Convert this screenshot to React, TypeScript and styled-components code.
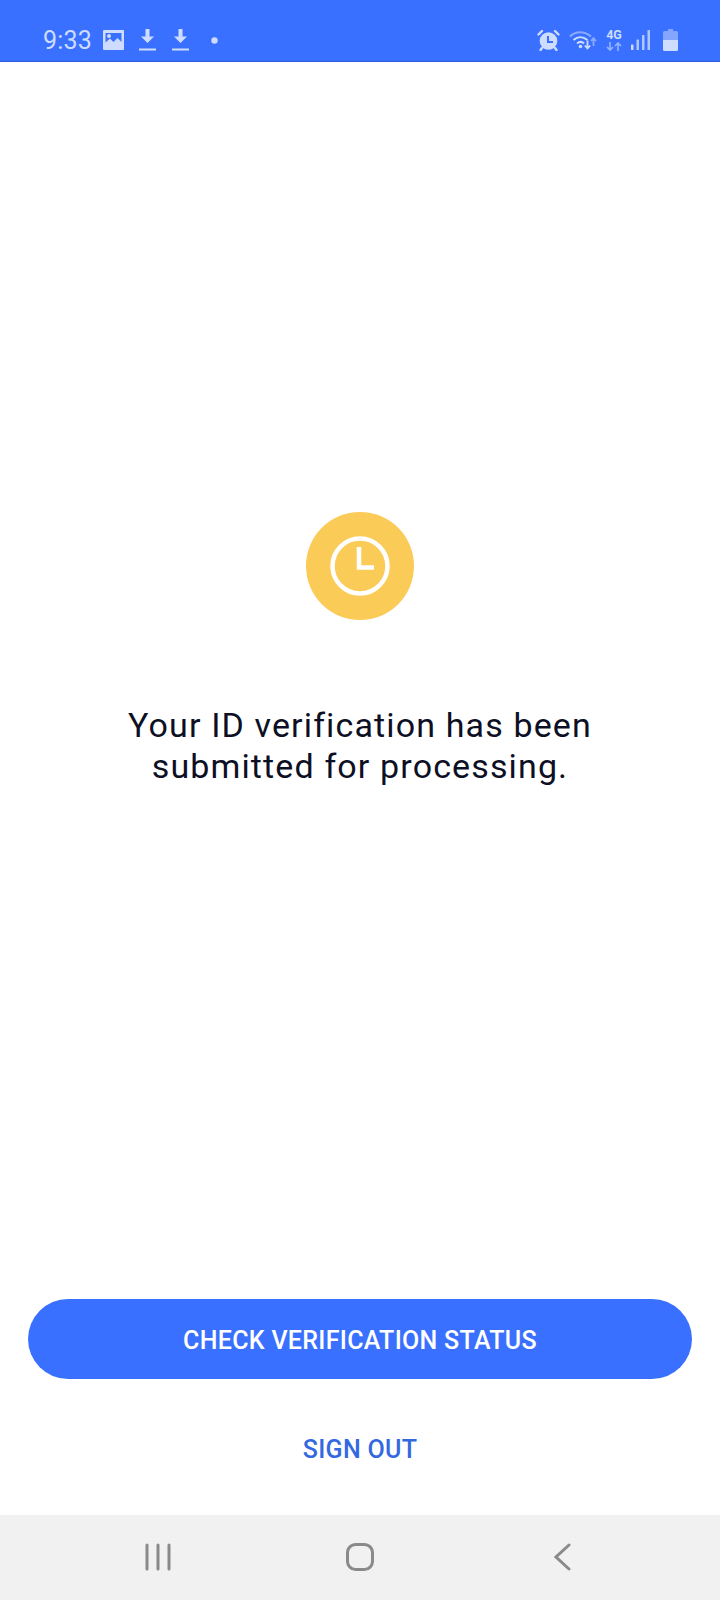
import { FunctionComponent, JSX } from 'react';
import styled, { createGlobalStyle } from 'styled-components';

const GlobalStyle = createGlobalStyle`
  html, body {
    margin: 0;
    padding: 0;
    background: #ffffff;
  }
`;

const AppContainer = styled.div`
  width: 720px;
  height: 1600px;
  display: flex;
  flex-direction: column;
  font-family: Roboto, 'Liberation Sans', sans-serif;
  background: #ffffff;
  overflow: hidden;
`;

const StatusBar = styled.div`
  box-sizing: border-box;
  height: 62px;
  flex: none;
  background: #3a70ff;
  border-bottom: 1px solid #2f5fd6;
  padding: 24px 42px 0 43px;
  display: flex;
  justify-content: space-between;
  align-items: flex-start;
  color: #cddcff;
`;

const StatusGroup = styled.div<{ gap: number }>`
  display: flex;
  align-items: center;
  height: 32px;
  gap: ${({ gap }) => gap}px;
`;

const Clock = styled.span`
  font-size: 25px;
  line-height: 32px;
  padding-top: 2px;
  margin-right: -3px;
  letter-spacing: 0.2px;
`;

const DotSlot = styled.span`
  display: flex;
  margin-left: 7px;
`;

const BatterySlot = styled.span`
  display: flex;
  margin-left: 4px;
`;

const Content = styled.main`
  flex: 1;
  display: flex;
  flex-direction: column;
  align-items: center;
  padding-top: 450px;
`;

const Badge = styled.div`
  width: 108px;
  height: 108px;
  border-radius: 50%;
  background: #fbcb58;
  display: flex;
  align-items: center;
  justify-content: center;
`;

const Message = styled.p`
  margin: 85px 0 0;
  color: #0d1024;
  font-size: 34px;
  line-height: 41px;
  letter-spacing: 1.13px;
  text-align: center;
`;

const Actions = styled.div`
  margin-top: auto;
  display: flex;
  flex-direction: column;
  align-items: center;
  padding-bottom: 40px;
`;

const PrimaryButton = styled.button`
  width: 664px;
  height: 80px;
  padding: 3px 0 0;
  border: none;
  border-radius: 40px;
  background: #3a70ff;
  color: #ffffff;
  font-family: inherit;
  font-size: 25px;
  font-weight: 500;
  letter-spacing: 0.3px;
`;

const TextButton = styled.button`
  margin-top: 44px;
  height: 52px;
  padding: 0 20px;
  border: none;
  background: none;
  color: #3268e0;
  font-family: inherit;
  font-size: 25px;
  font-weight: 500;
  letter-spacing: 0.3px;
`;

const NavBar = styled.nav`
  height: 85px;
  flex: none;
  background: #f1f1f1;
  display: grid;
  grid-template-columns: repeat(3, 202px);
  justify-content: center;
  align-items: center;
  justify-items: center;
`;

const NavSlot = styled.div`
  display: flex;
  align-items: center;
  justify-content: center;
  height: 85px;
  padding-bottom: 1px;
  box-sizing: border-box;
`;

const ImageIcon = () => (
  <svg width="21" height="20" viewBox="0 0 21 20">
    <path fill="currentColor" fillRule="evenodd" d="M1 0h19a1 1 0 0 1 1 1v18a1 1 0 0 1-1 1H1a1 1 0 0 1-1-1V1a1 1 0 0 1 1-1zm1.500 3v9.500l4.500-4 3.500 3.500 4-4 4 4V3z" />
    <circle cx="6" cy="6" r="2" fill="currentColor" />
  </svg>
);

const DownloadIcon = () => (
  <svg width="19" height="22" viewBox="-1 0 19 22">
    <path fill="currentColor" d="M6.500 0h4v7.500H15L8.500 14 2 7.500h4.500z" />
    <rect x="0" y="19.500" width="17" height="2" fill="currentColor" />
  </svg>
);

const Dot = () => (
  <svg width="7" height="7" viewBox="0 0 7 7">
    <circle cx="3.500" cy="3.500" r="3.200" fill="currentColor" />
  </svg>
);

const AlarmIcon = () => (
  <svg width="23" height="22" viewBox="0 0 23 22">
    <circle cx="11.500" cy="12" r="8.800" fill="currentColor" />
    <path d="M1.500 5.500 5 2M21.500 5.500 18 2M5 19l-1.500 2M18 19l1.500 2" stroke="currentColor" strokeWidth="2.400" strokeLinecap="round" fill="none" />
    <path d="M11 7v6h5" stroke="#3a70ff" strokeWidth="2" fill="none" />
  </svg>
);

const WifiIcon = () => (
  <svg width="28" height="22" viewBox="0 0 28 22" fill="none">
    <path d="M1 7.500C6.500 1.800 15.500 1.800 22 7.500" stroke="currentColor" strokeOpacity="0.55" strokeWidth="2" />
    <path d="M4.500 11C8.500 7.300 14 7.300 18.500 11" stroke="currentColor" strokeWidth="2" />
    <path d="M8 14.500c2.300-2 5-2 7 0" stroke="currentColor" strokeWidth="2" />
    <circle cx="11.500" cy="17.500" r="1.800" fill="currentColor" />
    <path d="M18.500 11.500v8M15.800 16.500l2.700 3 2.700-3" stroke="currentColor" strokeWidth="1.800" />
    <path d="M24.500 17V9.500M22 12l2.500-2.800L27 12" stroke="currentColor" strokeOpacity="0.55" strokeWidth="1.800" />
  </svg>
);

const NetworkLabel = styled.span`
  font-size: 12.5px;
  font-weight: 700;
  line-height: 12px;
  display: block;
  text-align: center;
`;

const NetworkStack = styled.div`
  display: flex;
  flex-direction: column;
  align-items: center;
  width: 16px;
  gap: 1px;
  color: #cddcff;
`;

const NetworkArrows = () => (
  <svg width="16" height="9" viewBox="0 0 16 9" fill="none" stroke="currentColor" strokeOpacity="0.6" strokeWidth="1.700">
    <path d="M4 0v8M1 5l3 3 3-3M12 9V1M9 4l3-3 3 3" />
  </svg>
);

const SignalIcon = () => (
  <svg width="19" height="20" viewBox="0 0 19 20" fill="currentColor">
    <rect x="0" y="14.500" width="2.500" height="5.500" rx="0.500" />
    <rect x="5.500" y="9.500" width="2.500" height="10.500" rx="0.500" fillOpacity="0.8" />
    <rect x="11" y="5" width="2.500" height="15" rx="0.500" fillOpacity="0.8" />
    <rect x="16.500" y="0" width="2.500" height="20" rx="0.500" fillOpacity="0.8" />
  </svg>
);

const BatteryIcon = () => (
  <svg width="15" height="22" viewBox="0 0 15 22" fill="currentColor">
    <path fillOpacity="0.5" d="M5 0h5v2h3.500a1.500 1.500 0 0 1 1.500 1.500V11H0V3.500A1.500 1.500 0 0 1 1.500 2H5z" />
    <path d="M0 11h15v9.500a1.500 1.500 0 0 1-1.500 1.500h-12A1.500 1.500 0 0 1 0 20.500z" />
  </svg>
);

const ClockIcon = () => (
  <svg width="60" height="60" viewBox="0 0 60 60" fill="none" stroke="#ffffff">
    <circle cx="30" cy="30" r="27.500" strokeWidth="4.500" />
    <path d="M29 11v20.500h15" strokeWidth="4.500" />
  </svg>
);

const RecentsIcon = () => (
  <svg width="26" height="28" viewBox="0 0 26 28" stroke="#8a8a8a" strokeWidth="3" strokeLinecap="round">
    <path d="M2 2v24M13 2v24M24 2v24" />
  </svg>
);

const HomeIcon = () => (
  <svg width="28" height="28" viewBox="0 0 28 28" fill="none" stroke="#8a8a8a" strokeWidth="3">
    <rect x="1.500" y="1.500" width="25" height="25" rx="8" />
  </svg>
);

const BackIcon = () => (
  <svg width="17" height="28" viewBox="0 0 17 28" fill="none" stroke="#8a8a8a" strokeWidth="3" strokeLinecap="round">
    <path d="M15 2 2 14l13 12" />
  </svg>
);

const App: FunctionComponent = (): JSX.Element => {
  return (
    <AppContainer>
      <GlobalStyle />
      <StatusBar>
        <StatusGroup gap={14}>
          <Clock>9:33</Clock>
          <ImageIcon />
          <DownloadIcon />
          <DownloadIcon />
          <DotSlot>
            <Dot />
          </DotSlot>
        </StatusGroup>
        <StatusGroup gap={9}>
          <AlarmIcon />
          <WifiIcon />
          <NetworkStack>
            <NetworkLabel>4G</NetworkLabel>
            <NetworkArrows />
          </NetworkStack>
          <SignalIcon />
          <BatterySlot>
            <BatteryIcon />
          </BatterySlot>
        </StatusGroup>
      </StatusBar>
      <Content>
        <Badge>
          <ClockIcon />
        </Badge>
        <Message>
          Your ID verification has been
          <br />
          submitted for processing.
        </Message>
        <Actions>
          <PrimaryButton>CHECK VERIFICATION STATUS</PrimaryButton>
          <TextButton>SIGN OUT</TextButton>
        </Actions>
      </Content>
      <NavBar>
        <NavSlot>
          <RecentsIcon />
        </NavSlot>
        <NavSlot>
          <HomeIcon />
        </NavSlot>
        <NavSlot>
          <BackIcon />
        </NavSlot>
      </NavBar>
    </AppContainer>
  );
};

export default App;
